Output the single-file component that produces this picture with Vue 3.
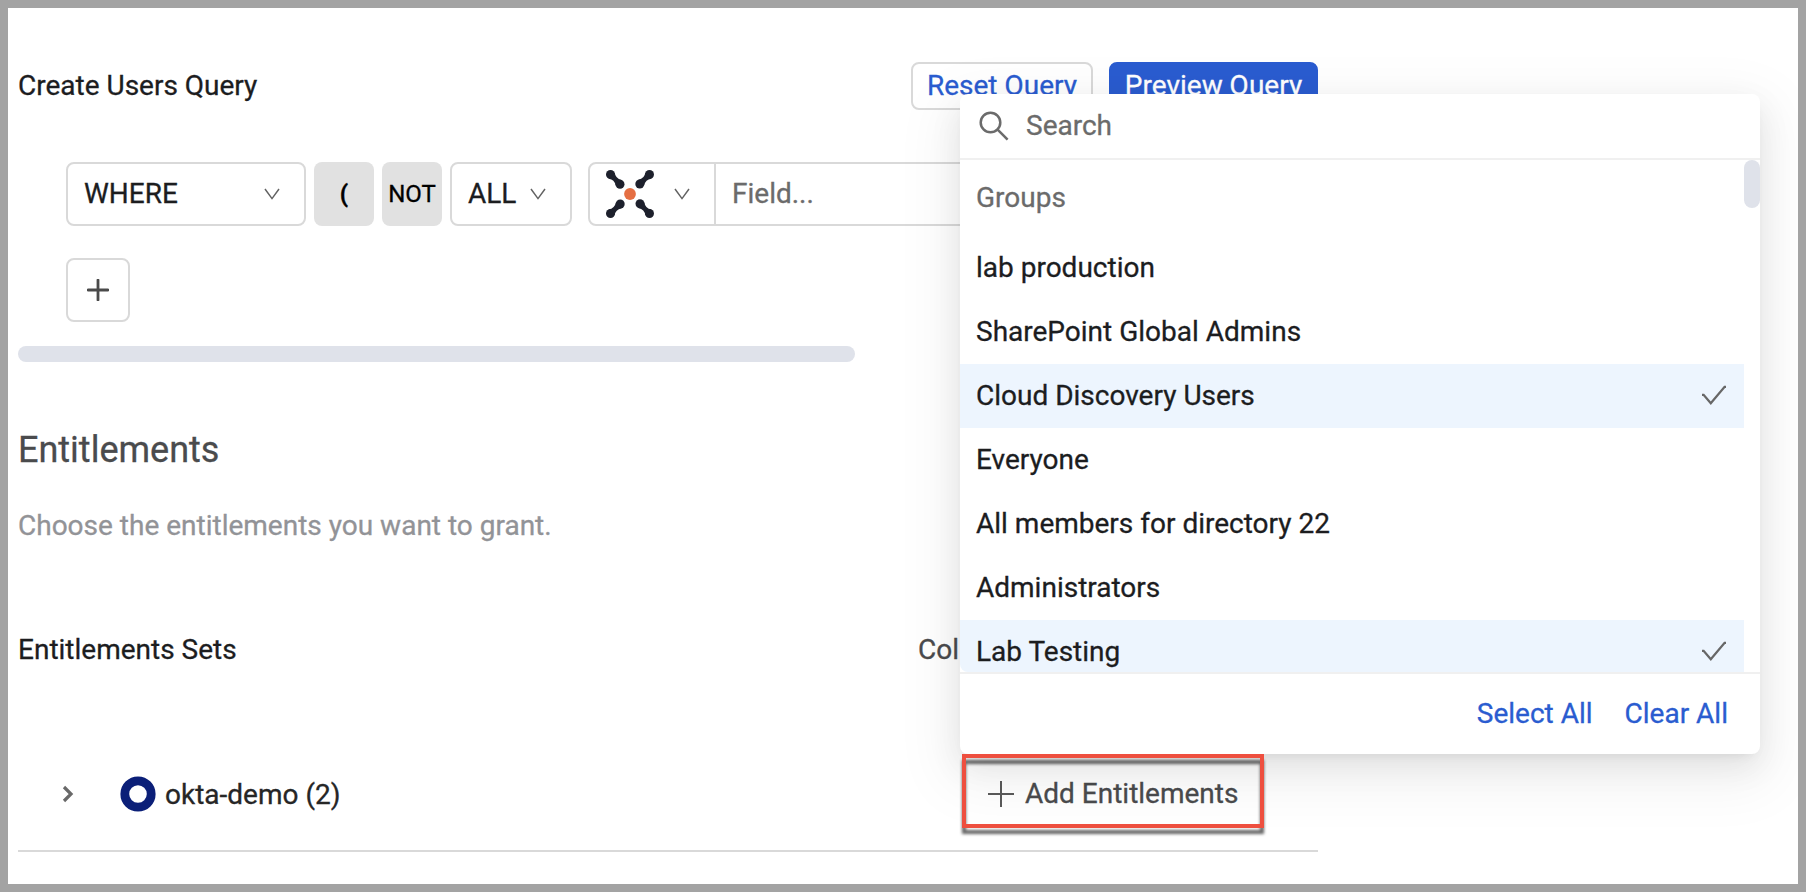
<script setup>
const groups = [
  { name: 'lab production', selected: false },
  { name: 'SharePoint Global Admins', selected: false },
  { name: 'Cloud Discovery Users', selected: true },
  { name: 'Everyone', selected: false },
  { name: 'All members for directory 22', selected: false },
  { name: 'Administrators', selected: false },
  { name: 'Lab Testing', selected: true },
]
const arms = [0, 90, 180, 270]
</script>

<template>
  <div class="page">
    <main class="content">
      <header class="query-head">
        <span class="title">Create Users Query</span>
        <button class="btn reset">Reset Query</button>
        <button class="btn preview">Preview Query</button>
      </header>

      <section class="builder">
        <div class="row">
          <div class="box select where">
            <span>WHERE</span>
            <svg class="chev" viewBox="0 0 16 12"><path d="M1 1 8 10.6 15 1" /></svg>
          </div>
          <div class="chip paren">(</div>
          <div class="chip">NOT</div>
          <div class="box select all">
            <span>ALL</span>
            <svg class="chev" viewBox="0 0 16 12"><path d="M1 1 8 10.6 15 1" /></svg>
          </div>
          <div class="box field-group">
            <div class="source">
              <svg class="logo" viewBox="-24 -24 48 48">
                <g v-for="a in arms" :key="a" :transform="`rotate(${a})`">
                  <circle cx="-19.5" cy="-19.5" r="4.5" />
                  <circle cx="-10" cy="-9.8" r="4.5" />
                  <path d="M-15.3-21.2Q-14.6-15.6-8.4-14L-14.2-8.4Q-15.6-14.6-21.2-15.3Z" />
                </g>
                <circle class="core" r="5.9" />
              </svg>
              <svg class="chev" viewBox="0 0 16 12"><path d="M1 1 8 10.6 15 1" /></svg>
            </div>
            <div class="field">Field...</div>
          </div>
        </div>
        <button class="box add-rule" aria-label="Add rule">
          <svg viewBox="0 0 22 22"><path d="M11 1V21M1 11H21" /></svg>
        </button>
        <div class="hscroll"></div>
      </section>

      <h2>Entitlements</h2>
      <p class="hint">Choose the entitlements you want to grant.</p>

      <div class="sets-head">
        <span>Entitlements Sets</span>
        <span class="col">Col</span>
      </div>

      <div class="set-row">
        <svg class="expand" viewBox="0 0 12 18"><path d="M2 2 9 9 2 16" /></svg>
        <svg class="okta" viewBox="0 0 36 36"><circle cx="18" cy="18" r="13.2" /></svg>
        <span class="app">okta-demo (2)</span>
        <span class="add">
          <svg viewBox="0 0 26 26"><path d="M13 0V26M0 13H26" /></svg>
          Add Entitlements
        </span>
      </div>
    </main>

    <div class="dropdown">
      <div class="search">
        <svg viewBox="0 0 30 30"><circle cx="11.5" cy="11.5" r="9.8" /><path d="M18.4 18.4 28.6 28.6" /></svg>
        <span>Search</span>
      </div>
      <div class="list">
        <div class="options">
          <div class="group-label">Groups</div>
          <div v-for="g in groups" :key="g.name" class="option" :class="{ selected: g.selected }">
            <span>{{ g.name }}</span>
            <svg v-if="g.selected" viewBox="0 0 26 22"><path d="M1 9.8H2.6L9.8 18.3 23.6 1.8H25" /></svg>
          </div>
        </div>
        <div class="track"><div class="thumb"></div></div>
      </div>
      <footer>
        <a>Select All</a>
        <a>Clear All</a>
      </footer>
    </div>

    <div class="callout"></div>
  </div>
</template>

<style>
body {
  margin: 0;
}
</style>

<style scoped>
.page {
  position: relative;
  box-sizing: border-box;
  width: 1806px;
  height: 892px;
  overflow: hidden;
  border: 8px solid #a3a3a3;
  background: #fff;
  color: #1c1d1f;
  font-family: Roboto, "Liberation Sans", sans-serif;
  font-size: 28px;
  line-height: 44px;
  white-space: nowrap;
  -webkit-text-stroke: 0.3px;
}
.page * {
  box-sizing: border-box;
}
svg {
  display: block;
  flex: none;
  fill: none;
}
button {
  font: inherit;
  padding: 0;
}
.content {
  width: 1300px;
  margin-left: 10px;
  padding-top: 54px;
}
.query-head {
  display: flex;
  align-items: center;
  gap: 16px;
  height: 48px;
}
.title {
  flex: 1;
}
.btn {
  height: 48px;
  border: 2px solid #d9d9d9;
  border-radius: 8px;
  background: #fff;
  color: #2a5cd0;
}
.reset {
  width: 182px;
}
.preview {
  width: 209px;
  border-color: #2a5cd0;
  background: #2a5cd0;
  color: #fff;
}
.builder {
  margin-top: 52px;
}
.row {
  display: flex;
  gap: 8px;
  height: 64px;
  margin-left: 48px;
}
.box {
  border: 2px solid #d9d9d9;
  border-radius: 8px;
  background: #fff;
}
.select {
  display: flex;
  align-items: center;
  justify-content: space-between;
  padding: 0 24px 0 16px;
}
.where {
  width: 240px;
}
.all {
  width: 122px;
}
.chev {
  width: 16px;
  height: 12px;
  stroke: #626262;
  stroke-width: 1.5;
}
.chip {
  display: flex;
  align-items: center;
  justify-content: center;
  width: 60px;
  border-radius: 8px;
  background: #e1e1e1;
  color: #000;
  font-size: 24px;
}
.paren {
  font-weight: 700;
}
.field-group {
  display: flex;
  width: 722px;
  margin-left: 8px;
}
.source {
  display: flex;
  align-items: center;
  gap: 20px;
  width: 126px;
  padding-left: 16px;
  border-right: 2px solid #d9d9d9;
}
.logo {
  width: 48px;
  height: 48px;
  fill: #1d202c;
}
.core {
  fill: #e56f43;
}
.field {
  display: flex;
  align-items: center;
  padding-left: 16px;
  color: #6b6b6b;
}
.add-rule {
  display: flex;
  align-items: center;
  justify-content: center;
  width: 64px;
  height: 64px;
  margin: 32px 0 0 48px;
}
.add-rule svg {
  width: 22px;
  height: 22px;
  stroke: #4a4a4a;
  stroke-width: 2.8;
  stroke-linecap: round;
}
.hscroll {
  width: 837px;
  height: 16px;
  margin-top: 24px;
  border-radius: 8px;
  background: #dfe2ea;
}
h2 {
  margin: 66px 0 0;
  color: #4a4b4d;
  font-size: 36px;
  font-weight: 400;
  line-height: 44px;
}
.hint {
  margin: 32px 0 0;
  color: #929397;
}
.sets-head {
  display: flex;
  margin-top: 80px;
}
.sets-head > span:first-child {
  width: 900px;
}
.col {
  color: #4a4b4d;
}
.set-row {
  display: flex;
  align-items: center;
  height: 116px;
  margin-top: 64px;
  padding-top: 2px;
  border-bottom: 2px solid #d9d9d9;
}
.expand {
  width: 12px;
  height: 18px;
  margin-left: 44px;
  stroke: #696969;
  stroke-width: 3.2;
}
.okta {
  width: 36px;
  height: 36px;
  margin-left: 46px;
  stroke: #0b1f78;
  stroke-width: 8.8;
}
.app {
  width: 823px;
  margin-left: 9px;
  padding-top: 2px;
  color: #262626;
}
.add {
  display: flex;
  align-items: center;
  gap: 11px;
  color: #4a4b4d;
}
.add svg {
  width: 26px;
  height: 26px;
  stroke: #5a5a5a;
  stroke-width: 2;
}
.dropdown {
  position: absolute;
  left: 952px;
  top: 86px;
  display: flex;
  flex-direction: column;
  width: 800px;
  height: 660px;
  border-radius: 8px;
  background: #fff;
  box-shadow: 0 6px 12px -8px rgba(0, 0, 0, 0.12), 0 12px 32px rgba(0, 0, 0, 0.08),
    0 18px 56px 16px rgba(0, 0, 0, 0.05);
}
.search {
  display: flex;
  align-items: center;
  gap: 17px;
  height: 66px;
  padding-left: 19px;
  border-bottom: 2px solid #f0f0f0;
  color: #6b6b6b;
}
.search svg {
  width: 30px;
  height: 30px;
  stroke: #6b6b6b;
  stroke-width: 2.5;
}
.list {
  display: flex;
  height: 512px;
  overflow: hidden;
  border-bottom-left-radius: 8px;
}
.options {
  width: 784px;
}
.group-label {
  height: 76px;
  padding-left: 16px;
  color: #6b6b6b;
  line-height: 76px;
}
.option {
  display: flex;
  align-items: center;
  justify-content: space-between;
  height: 64px;
  padding: 0 17px 0 16px;
}
.option svg {
  width: 26px;
  height: 22px;
  stroke: #676767;
  stroke-width: 2.3;
}
.selected {
  background: #edf5fe;
}
.track {
  width: 16px;
}
.thumb {
  height: 48px;
  border-radius: 8px;
  background: #dfe2ea;
}
footer {
  display: flex;
  align-items: center;
  justify-content: flex-end;
  flex: 1;
  gap: 32px;
  padding-right: 32px;
  border-top: 2px solid #f0f0f0;
  color: #2a5cd0;
}
.callout {
  position: absolute;
  left: 954px;
  top: 746px;
  width: 302px;
  height: 74px;
  border: 4px solid #ee4f3f;
  filter: drop-shadow(0 6px 1.5px rgba(0, 0, 0, 0.6));
}
</style>
